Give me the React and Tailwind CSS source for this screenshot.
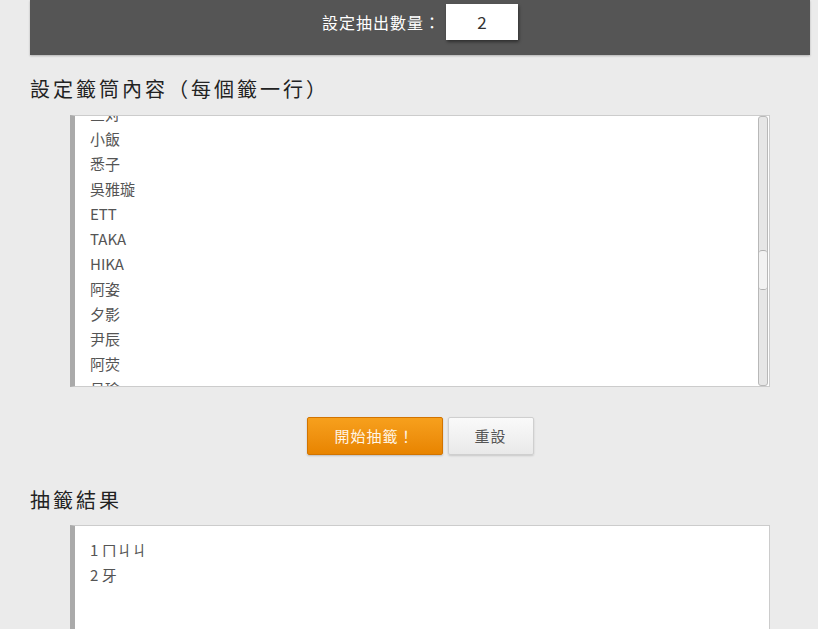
import React from 'react';

const names = ['三对', '小飯', '悉子', '吳雅璇', 'ETT', 'TAKA', 'HIKA', '阿姿', '夕影', '尹辰', '阿荧', '呂瑜'];

const font = { fontFamily: '"Noto Sans CJK TC", "Noto Sans", sans-serif' };

export default function App() {
  return (
    <div className="min-h-screen h-[629px] overflow-hidden bg-[#ebebeb]" style={font}>
      <div className="mx-[30px] w-[780px]">
        {/* Top bar */}
        <div className="h-[55px] bg-[#555555] shadow-[0_1px_2px_rgba(0,0,0,0.25)] flex items-start justify-center pt-1">
          <span className="text-white text-[16px] tracking-[1px] leading-[36px] mr-[5px]">設定抽出數量：</span>
          <div className="w-[72px] h-[36px] bg-white shadow-[1px_2px_3px_rgba(0,0,0,0.45)] flex items-center justify-center text-[17px] text-[#333]">
            2
          </div>
        </div>

        {/* Pool */}
        <h2 className="text-[20px] text-[#222] leading-none mt-[24px] tracking-[3px]">設定籤筒內容（每個籤一行）</h2>
        <div className="relative ml-[40px] mt-[16px] w-[700px] h-[272px] bg-white border border-[#cccccc] border-l-[5px] border-l-[#aaaaaa] overflow-hidden">
          <div className="-mt-[15px] pl-[15px] text-[15px] leading-[25px] text-[#555]">
            {names.map((n) => (
              <div key={n}>{n}</div>
            ))}
          </div>
          {/* scrollbar */}
          <div className="absolute right-[1px] top-0 bottom-0 w-[10px] rounded-[3px] border border-[#b8b8b8] bg-[#e6e6e6]">
            <div className="absolute left-0 right-0 top-[133px] h-[40px] rounded-[3px] border-y border-[#b0b0b0] bg-[#f2f2f2]" />
          </div>
        </div>

        {/* Buttons */}
        <div className="flex justify-center gap-[5px] mt-[30px]">
          <button className="w-[136px] h-[38px] rounded-[2px] border border-[#d27400] bg-gradient-to-b from-[#f7a01c] to-[#e88400] text-[#fff5e6] text-[15px] tracking-[1px] shadow-[0_1px_2px_rgba(0,0,0,0.2)]">
            開始抽籤！
          </button>
          <button className="w-[86px] h-[38px] rounded-[2px] border border-[#cfcfcf] bg-gradient-to-b from-[#fafafa] to-[#e9e9e9] text-[#555] text-[15px] tracking-[1px] shadow-[0_1px_2px_rgba(0,0,0,0.15)]">
            重設
          </button>
        </div>

        {/* Result */}
        <h2 className="text-[20px] text-[#222] leading-none mt-[35px] tracking-[3px]">抽籤結果</h2>
        <div className="ml-[40px] mt-[15px] w-[700px] h-[120px] bg-white border border-[#cccccc] border-l-[5px] border-l-[#aaaaaa] pt-[11px] pl-[15px] text-[15px] leading-[25px] text-[#555]">
          <div>1 ㄇㄐㄐ</div>
          <div>2 牙</div>
        </div>
      </div>
    </div>
  );
}
